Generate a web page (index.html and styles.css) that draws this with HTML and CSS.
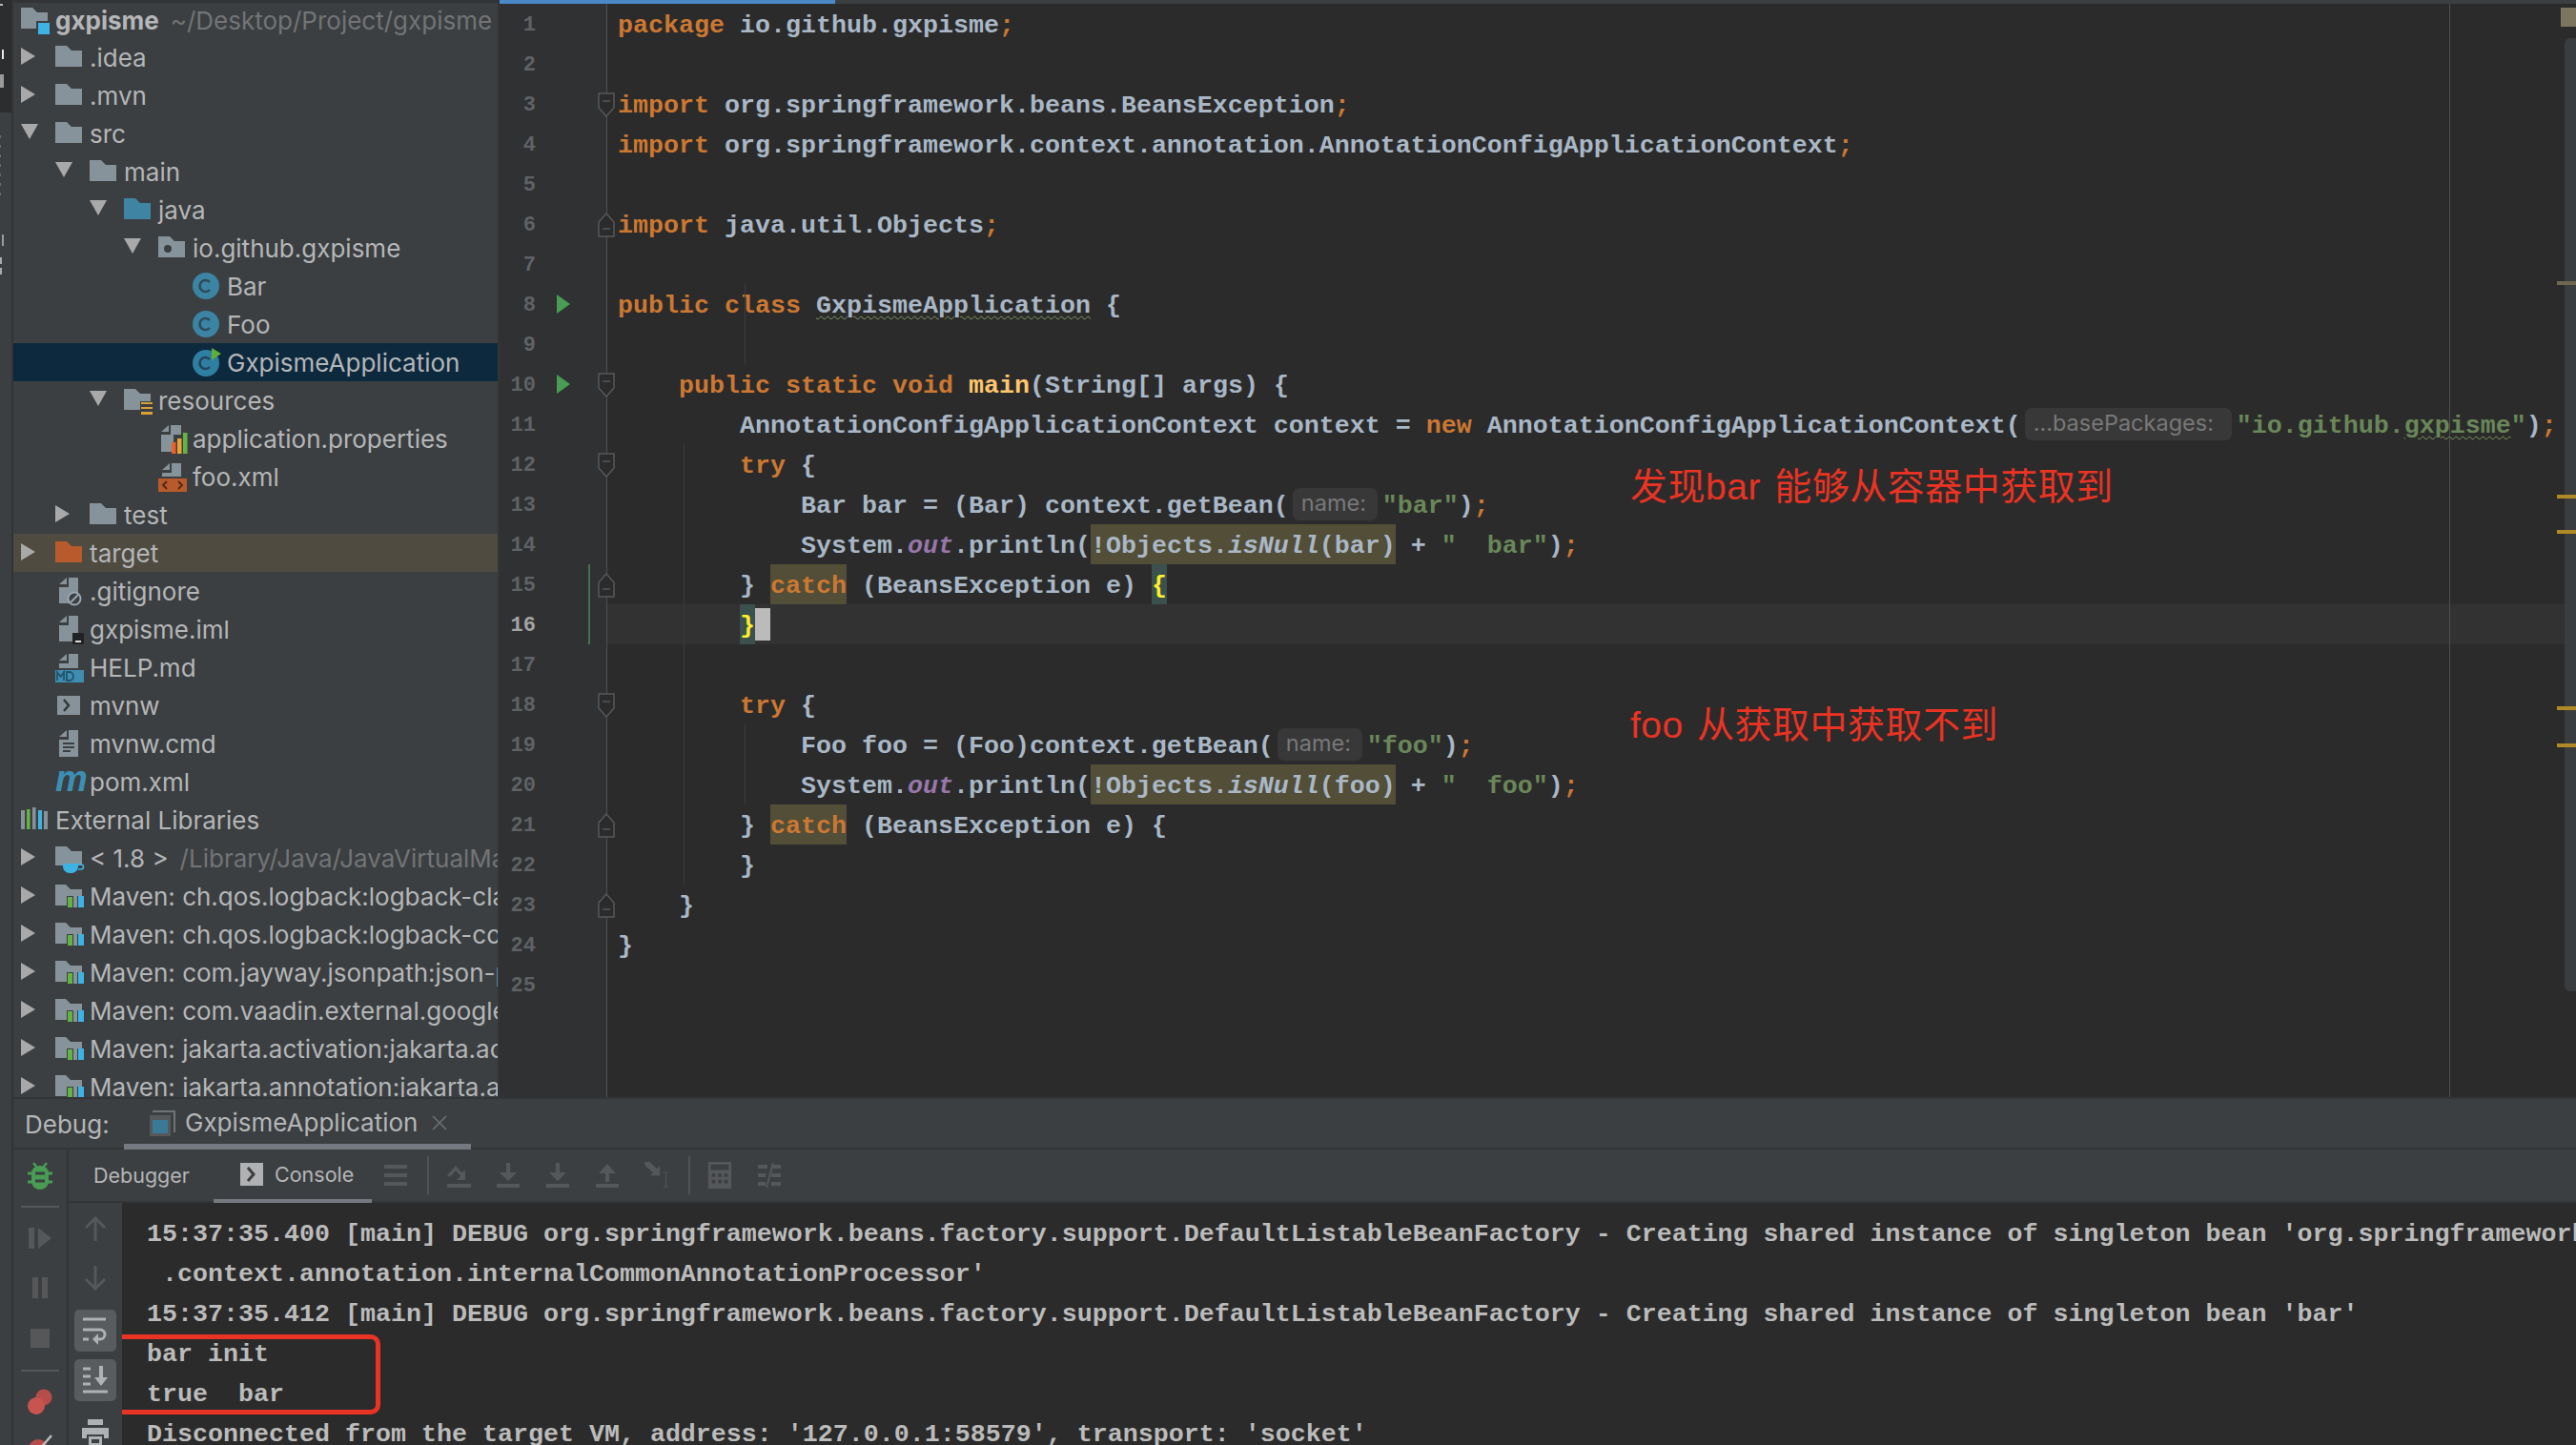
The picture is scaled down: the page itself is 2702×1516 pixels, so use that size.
FILE: index.html
```html
<!DOCTYPE html>
<html lang="en">
<head>
<meta charset="utf-8">
<title>GxpismeApplication</title>
<link rel="stylesheet" href="styles.css">
</head>
<body>
<svg class="defs" width="0" height="0">
  <symbol id="folder" viewBox="0 0 36 40"><path d="M0 8h12l5 5h11v17H0z" fill="currentColor"/></symbol>
  <symbol id="project" viewBox="0 0 36 40"><path d="M0 8h12l5 5h11v17H0z" fill="#87939a"/><rect x="16" y="22" width="16" height="16" fill="#3c3f41"/><rect x="18" y="24" width="12" height="12" fill="#3db3e4"/></symbol>
  <symbol id="pkg" viewBox="0 0 36 40"><path d="M0 8h12l5 5h11v17H0z" fill="#87939a"/><circle cx="10" cy="21" r="4" fill="#3c3f41"/></symbol>
  <symbol id="res" viewBox="0 0 36 40"><path d="M0 8h12l5 5h11v8H17v9H0z" fill="#87939a"/><path d="M18 22h12v2H18zM18 27h12v2H18zM18 32h12v3H18z" fill="#d9a036"/></symbol>
  <symbol id="cls" viewBox="0 0 36 40"><circle cx="14" cy="20" r="14" fill="#3b84a3"/><path d="M18 16a6 6 0 1 0 0 8" fill="none" stroke="#2f4a58" stroke-width="2.6"/></symbol>
  <symbol id="clsrun" viewBox="0 0 36 40"><circle cx="14" cy="21" r="14" fill="#2f7fa3"/><path d="M18 17a6 6 0 1 0 0 8" fill="none" stroke="#22455a" stroke-width="2.6"/><path d="M20 5l10 6-10 7z" fill="#5fae3a"/></symbol>
  <symbol id="ign" viewBox="0 0 36 40"><path d="M4 13l8-7v7zM14 6h10v27H4V16h10z" fill="#87939a"/><circle cx="20" cy="28" r="6.5" fill="#3c3f41" stroke="#9aa7b0" stroke-width="2"/><path d="M16 32l8-8" stroke="#9aa7b0" stroke-width="2"/></symbol>
  <symbol id="iml" viewBox="0 0 36 40"><path d="M4 13l8-7v7zM14 6h10v27H4V16h10z" fill="#87939a"/><rect x="18" y="24" width="12" height="12" fill="#222224"/><rect x="21" y="32" width="6" height="2" fill="#ddd"/></symbol>
  <symbol id="md" viewBox="0 0 36 40"><path d="M4 13l8-7v7zM14 6h10v15H4v-5h10z" fill="#87939a"/><rect x="0" y="23" width="30" height="13" fill="#3f8db0"/><path d="M2 34v-9l3.500 5 3.500-5v9M12 25v9h3a4 4.500 0 0 0 0-9z" fill="none" stroke="#23536b" stroke-width="1.800"/></symbol>
  <symbol id="term" viewBox="0 0 36 40"><rect x="2" y="10" width="24" height="20" fill="#87939a"/><path d="M9 14l5 6-5 6" fill="none" stroke="#33373a" stroke-width="2.400"/></symbol>
  <symbol id="cmd" viewBox="0 0 36 40"><path d="M4 13l8-7v7zM14 6h10v28H4V16h10z" fill="#87939a"/><path d="M8 20h12M8 24h12M8 28h8" stroke="#3c3f41" stroke-width="2"/></symbol>
  <symbol id="props" viewBox="0 0 36 40"><path d="M3 13l8-7v7zM13 6h11v10h-8v18H3V16h10z" fill="#87939a"/><rect x="14" y="24" width="4.500" height="12" fill="#e8622a"/><rect x="20" y="20" width="4.500" height="16" fill="#e8a23a"/><rect x="26" y="14" width="4.500" height="22" fill="#62b543"/></symbol>
  <symbol id="xml" viewBox="0 0 36 40"><path d="M4 13l8-7v7zM14 6h10v14H4v-4h10z" fill="#87939a"/><rect x="0" y="22" width="30" height="14" fill="#b85a2b"/><path d="M9 25l-4 4 4 4M21 25l4 4-4 4" fill="none" stroke="#4a2a18" stroke-width="1.800"/></symbol>
  <symbol id="libs" viewBox="0 0 36 40"><path d="M0 10h4v20H0z" fill="#87939a"/><rect x="6" y="9" width="3.500" height="21" fill="#62b543"/><rect x="12" y="7" width="3.500" height="23" fill="#87939a"/><rect x="24" y="11" width="4" height="19" fill="#87939a"/><rect x="18" y="10" width="4" height="20" fill="#3db3e4"/></symbol>
  <symbol id="mvnlib" viewBox="0 0 36 40"><path d="M0 8h11l5 5h12v7H12v10H0z" fill="#87939a"/><rect x="13" y="21" width="5" height="11" fill="#62b543"/><rect x="19" y="17" width="4" height="15" fill="#87939a"/><rect x="24" y="20" width="6" height="12" fill="#3db3e4"/></symbol>
  <symbol id="jdk" viewBox="0 0 36 40"><path d="M0 8h12l5 5h11v15H0z" fill="#87939a"/><path d="M8 26h16v3a7 7 0 0 1-7 7h-2a7 7 0 0 1-7-7z" fill="#3db3e4"/><path d="M24 27h3a2.500 2.500 0 0 1 0 5h-3" fill="none" stroke="#3db3e4" stroke-width="1.500"/></symbol>
  <symbol id="fold-down" viewBox="0 0 18 26"><path d="M1 1h16v15l-8 9-8-9z" fill="#2b2b2b" stroke="#55585a" stroke-width="1.500"/><path d="M5 9h8" stroke="#55585a" stroke-width="1.500"/></symbol>
  <symbol id="fold-up" viewBox="0 0 18 26"><path d="M1 25h16V10L9 1 1 10z" fill="#2b2b2b" stroke="#55585a" stroke-width="1.500"/><path d="M5 17h8" stroke="#55585a" stroke-width="1.500"/></symbol>
</svg>

<div class="app">
  <aside class="strip">
    <svg class="strip-art" width="12" height="1516">
      <rect width="12" height="118" fill="#2b2d2f"/>
      <rect x="2" y="52" width="2" height="10" fill="#e6e6e6"/>
      <rect x="0" y="78" width="4" height="14" fill="#9a9a9a"/>
      <rect x="0" y="4" width="3" height="2" fill="#bbb"/>
      <path d="M0 142v68" stroke="#77797b" stroke-width="1.500" stroke-dasharray="3 7"/>
      <rect x="2" y="246" width="2" height="12" fill="#9a9a9a"/>
      <rect x="0" y="270" width="2" height="7" fill="#aaa"/>
      <rect x="0" y="281" width="2" height="7" fill="#aaa"/>
    </svg>
  </aside>

  <div class="workspace">
    <div class="upper">
      <nav class="tree">
        <div class="row root first"><svg class="ic"><use href="#project"/></svg><b class="name">gxpisme</b><span class="dim">~/Desktop/Project/gxpisme</span></div>
        <div class="row l0"><i class="tw r"></i><svg class="ic grey"><use href="#folder"/></svg><span>.idea</span></div>
        <div class="row l0"><i class="tw r"></i><svg class="ic grey"><use href="#folder"/></svg><span>.mvn</span></div>
        <div class="row l0"><i class="tw d"></i><svg class="ic grey"><use href="#folder"/></svg><span>src</span></div>
        <div class="row l1"><i class="tw d"></i><svg class="ic grey"><use href="#folder"/></svg><span>main</span></div>
        <div class="row l2"><i class="tw d"></i><svg class="ic blue"><use href="#folder"/></svg><span>java</span></div>
        <div class="row l3"><i class="tw d"></i><svg class="ic"><use href="#pkg"/></svg><span>io.github.gxpisme</span></div>
        <div class="row l4"><i class="tw"></i><svg class="ic"><use href="#cls"/></svg><span>Bar</span></div>
        <div class="row l4"><i class="tw"></i><svg class="ic"><use href="#cls"/></svg><span>Foo</span></div>
        <div class="row l4 selected"><i class="tw"></i><svg class="ic"><use href="#clsrun"/></svg><span>GxpismeApplication</span></div>
        <div class="row l2"><i class="tw d"></i><svg class="ic"><use href="#res"/></svg><span>resources</span></div>
        <div class="row l3"><i class="tw"></i><svg class="ic"><use href="#props"/></svg><span>application.properties</span></div>
        <div class="row l3"><i class="tw"></i><svg class="ic"><use href="#xml"/></svg><span>foo.xml</span></div>
        <div class="row l1"><i class="tw r"></i><svg class="ic grey"><use href="#folder"/></svg><span>test</span></div>
        <div class="row l0 excluded"><i class="tw r"></i><svg class="ic orange"><use href="#folder"/></svg><span>target</span></div>
        <div class="row l0"><i class="tw"></i><svg class="ic"><use href="#ign"/></svg><span>.gitignore</span></div>
        <div class="row l0"><i class="tw"></i><svg class="ic"><use href="#iml"/></svg><span>gxpisme.iml</span></div>
        <div class="row l0"><i class="tw"></i><svg class="ic"><use href="#md"/></svg><span>HELP.md</span></div>
        <div class="row l0"><i class="tw"></i><svg class="ic"><use href="#term"/></svg><span>mvnw</span></div>
        <div class="row l0"><i class="tw"></i><svg class="ic"><use href="#cmd"/></svg><span>mvnw.cmd</span></div>
        <div class="row l0"><i class="tw"></i><span class="ic pom">m</span><span>pom.xml</span></div>
        <div class="row root"><svg class="ic"><use href="#libs"/></svg><span>External Libraries</span></div>
        <div class="row l0"><i class="tw r"></i><svg class="ic"><use href="#jdk"/></svg><span>&lt; 1.8 &gt;</span><span class="dim">/Library/Java/JavaVirtualMachines</span></div>
        <div class="row l0"><i class="tw r"></i><svg class="ic"><use href="#mvnlib"/></svg><span>Maven: ch.qos.logback:logback-classic</span></div>
        <div class="row l0"><i class="tw r"></i><svg class="ic"><use href="#mvnlib"/></svg><span>Maven: ch.qos.logback:logback-core</span></div>
        <div class="row l0"><i class="tw r"></i><svg class="ic"><use href="#mvnlib"/></svg><span>Maven: com.jayway.jsonpath:json-path</span></div>
        <div class="row l0"><i class="tw r"></i><svg class="ic"><use href="#mvnlib"/></svg><span>Maven: com.vaadin.external.google</span></div>
        <div class="row l0"><i class="tw r"></i><svg class="ic"><use href="#mvnlib"/></svg><span>Maven: jakarta.activation:jakarta.activation</span></div>
        <div class="row l0"><i class="tw r"></i><svg class="ic"><use href="#mvnlib"/></svg><span>Maven: jakarta.annotation:jakarta.annotation</span></div>
      </nav>

      <main class="editor">
        <div class="tabline"><div class="tabline-active"></div></div>
        <div class="editor-body">
          <div class="gutter">
            <div class="gl"><span class="num">1</span></div>
            <div class="gl"><span class="num">2</span></div>
            <div class="gl"><span class="num">3</span><svg class="fold"><use href="#fold-down"/></svg></div>
            <div class="gl"><span class="num">4</span></div>
            <div class="gl"><span class="num">5</span></div>
            <div class="gl"><span class="num">6</span><svg class="fold"><use href="#fold-up"/></svg></div>
            <div class="gl"><span class="num">7</span></div>
            <div class="gl"><span class="num">8</span><i class="run"></i></div>
            <div class="gl"><span class="num">9</span></div>
            <div class="gl"><span class="num">10</span><i class="run"></i><svg class="fold"><use href="#fold-down"/></svg></div>
            <div class="gl"><span class="num">11</span></div>
            <div class="gl"><span class="num">12</span><svg class="fold"><use href="#fold-down"/></svg></div>
            <div class="gl"><span class="num">13</span></div>
            <div class="gl"><span class="num">14</span></div>
            <div class="gl changed"><span class="num">15</span><svg class="fold"><use href="#fold-up"/></svg></div>
            <div class="gl changed"><span class="num cur">16</span></div>
            <div class="gl"><span class="num">17</span></div>
            <div class="gl"><span class="num">18</span><svg class="fold"><use href="#fold-down"/></svg></div>
            <div class="gl"><span class="num">19</span></div>
            <div class="gl"><span class="num">20</span></div>
            <div class="gl"><span class="num">21</span><svg class="fold"><use href="#fold-up"/></svg></div>
            <div class="gl"><span class="num">22</span></div>
            <div class="gl"><span class="num">23</span><svg class="fold"><use href="#fold-up"/></svg></div>
            <div class="gl"><span class="num">24</span></div>
            <div class="gl"><span class="num">25</span></div>
          </div>
          <div class="code">
            <div class="guide g1"></div><div class="guide g2"></div><div class="guide g3"></div>
            <div class="ln"><span class="k">package</span> io.github.gxpisme<span class="k">;</span></div>
            <div class="ln"></div>
            <div class="ln"><span class="k">import</span> org.springframework.beans.BeansException<span class="k">;</span></div>
            <div class="ln"><span class="k">import</span> org.springframework.context.annotation.AnnotationConfigApplicationContext<span class="k">;</span></div>
            <div class="ln"></div>
            <div class="ln"><span class="k">import</span> java.util.Objects<span class="k">;</span></div>
            <div class="ln"></div>
            <div class="ln"><span class="k">public class</span> <span class="warn">GxpismeApplication</span> {</div>
            <div class="ln"></div>
            <div class="ln">    <span class="k">public static void</span> <span class="m">main</span>(String[] args) {</div>
            <div class="ln">        AnnotationConfigApplicationContext context = <span class="k">new</span> AnnotationConfigApplicationContext(<span class="hint hint-long">...basePackages:</span><span class="s">"io.github.<span class="warn">gxpisme</span>"</span>)<span class="k">;</span></div>
            <div class="ln">        <span class="k">try</span> {</div>
            <div class="ln">            Bar bar = (Bar) context.getBean(<span class="hint">name:</span><span class="s">"bar"</span>)<span class="k">;</span></div>
            <div class="ln">            System.<span class="o">out</span>.println(<span class="hl">!Objects.<i>isNull</i>(bar)</span> + <span class="s">"  bar"</span>)<span class="k">;</span></div>
            <div class="ln">        } <span class="hl k">catch</span> (BeansException e) <span class="brace">{</span></div>
            <div class="ln current">        <span class="brace">}</span><span class="caret"></span></div>
            <div class="ln"></div>
            <div class="ln">        <span class="k">try</span> {</div>
            <div class="ln">            Foo foo = (Foo)context.getBean(<span class="hint">name:</span><span class="s">"foo"</span>)<span class="k">;</span></div>
            <div class="ln">            System.<span class="o">out</span>.println(<span class="hl">!Objects.<i>isNull</i>(foo)</span> + <span class="s">"  foo"</span>)<span class="k">;</span></div>
            <div class="ln">        } <span class="hl k">catch</span> (BeansException e) {</div>
            <div class="ln">        }</div>
            <div class="ln">    }</div>
            <div class="ln">}</div>
            <div class="ln"></div>
            <div class="note note-a">发现bar 能够从容器中获取到</div>
            <div class="note note-b">foo 从获取中获取不到</div>
            <div class="margin-line"></div>
          </div>
          <div class="scroll">
            <div class="scroll-thumb"></div>
            <div class="mark top"></div>
            <div class="mark m1"></div><div class="mark m2"></div><div class="mark m3"></div><div class="mark m4"></div><div class="mark m5"></div>
          </div>
        </div>
      </main>
    </div>

    <section class="debug">
      <header class="debug-tabs">
        <span class="debug-title">Debug:</span>
        <div class="debug-tab">
          <svg class="tab-ic" width="28" height="30" viewBox="0 0 28 30"><path d="M4 3h23v22" fill="none" stroke="#6e7477" stroke-width="2"/><rect x="1" y="7" width="22" height="22" fill="#55595c"/><rect x="4" y="12" width="16" height="14" fill="#3b7a96"/></svg>
          <span>GxpismeApplication</span>
          <svg class="tab-x" width="16" height="16" viewBox="0 0 16 16"><path d="M1 1l14 14M15 1L1 15" stroke="#6e7072" stroke-width="1.600"/></svg>
        </div>
      </header>
      <div class="debug-body">
        <div class="rail">
          <div class="slot s-bug"><svg width="26" height="30" viewBox="0 0 26 30"><path d="M6 1l4 5M20 1l-4 5" stroke="#499c54" stroke-width="2.400"/><path d="M13 4c6 0 9 4 9 8v8c0 5-4 9-9 9s-9-4-9-9v-8c0-4 3-8 9-8z" fill="#499c54"/><path d="M0 12h26M0 21h26" stroke="#499c54" stroke-width="3"/><path d="M8 12h10M8 20h10" stroke="#3c3f41" stroke-width="3"/></svg></div>
          <div class="sep"></div>
          <div class="slot s-a"><svg width="24" height="22" viewBox="0 0 24 22"><path d="M0 0h6v22H0zM10 0l14 11-14 11z" fill="#555759"/></svg></div>
          <div class="slot s-b"><svg width="16" height="22" viewBox="0 0 16 22"><path d="M0 0h6v22H0zM10 0h6v22h-6z" fill="#555759"/></svg></div>
          <div class="slot s-c"><svg width="20" height="20" viewBox="0 0 20 20"><rect width="20" height="20" fill="#555759"/></svg></div>
          <div class="sep"></div>
          <div class="slot s-d"><svg width="28" height="28" viewBox="0 0 28 28"><circle cx="18" cy="9" r="8.500" fill="#b84c4a"/><circle cx="10" cy="18" r="9" fill="#c75450"/></svg></div>
          <div class="slot s-e"><svg width="28" height="28" viewBox="0 0 28 28"><circle cx="12" cy="18" r="10" fill="#b84c4a"/><path d="M12 20L26 4" stroke="#bbb" stroke-width="2.500"/></svg></div>
        </div>
        <div class="debug-main">
          <div class="toolbar">
            <span class="tb-tab">Debugger</span>
            <span class="tb-tab active"><svg width="24" height="24" viewBox="0 0 24 24"><rect width="24" height="24" fill="#afb1b3"/><path d="M8 5l6 7-6 7" fill="none" stroke="#3c3f41" stroke-width="3"/></svg>Console</span>
            <svg class="tb tb-list" viewBox="0 0 26 26"><path d="M1 2h24v4H1zM1 11h24v4H1zM1 20h24v4H1z" fill="#555759"/></svg>
            <i class="tb-sep"></i>
            <svg class="tb" viewBox="0 0 26 26"><path d="M1 13L10 3l6 7 4-2v10h-9l4-4-5-6-6 7zM1 22h25v4H1z" fill="#555759"/></svg>
            <svg class="tb" viewBox="0 0 26 26"><path d="M11 0h4v10h7L13 19 4 10h7zM1 22h24v4H1z" fill="#555759"/></svg>
            <svg class="tb" viewBox="0 0 26 26"><path d="M11 0h4v10h7L13 19 4 10h7zM1 22h24v4H1z" fill="#555759"/></svg>
            <svg class="tb" viewBox="0 0 26 26"><path d="M13 1l9 10h-7v9h-4v-9H4zM1 22h24v4H1z" fill="#555759"/></svg>
            <svg class="tb" viewBox="0 0 26 30"><path d="M0 0h4l9 8 3-3v10H6l3-3-9-8zM20 12h6M20 28h6M23 12v16" fill="#555759" stroke="#555759" stroke-width="1"/></svg>
            <i class="tb-sep"></i>
            <svg class="tb tb-calc" viewBox="0 0 26 30"><path fill-rule="evenodd" d="M0 0h26v30H0zM3 3v6h20V3zM4 13v4h4v-4zM11 13v4h4v-4zM18 13v4h4v-4zM4 20v4h4v-4zM11 20v4h4v-4zM18 20v4h4v-4z" fill="#555759"/></svg>
            <svg class="tb" viewBox="0 0 26 26"><path d="M1 2h10v4H1zM1 11h8v4H1zM1 20h8v4H1zM15 2h10v4H15zM15 11h10v4H15zM15 20h10v4H15z" fill="#555759"/><path d="M17 0l-7 26" stroke="#555759" stroke-width="2"/></svg>
          </div>
          <div class="console-wrap">
            <div class="rail2">
              <div class="slot2 up"><svg width="22" height="26" viewBox="0 0 22 26"><path d="M11 26V2M1 12L11 2l10 10" fill="none" stroke="#555759" stroke-width="3"/></svg></div>
              <div class="slot2 down"><svg width="22" height="26" viewBox="0 0 22 26"><path d="M11 0v24M1 14l10 10 10-10" fill="none" stroke="#555759" stroke-width="3"/></svg></div>
              <div class="toggle"><svg width="26" height="30" viewBox="0 0 26 30"><path d="M0 3h24M0 14h18a5 5 0 0 1 0 10h-4M0 24h6" fill="none" stroke="#afb1b3" stroke-width="3"/><path d="M16 18l-6 6 6 6z" fill="#afb1b3"/></svg></div>
              <div class="toggle"><svg width="26" height="30" viewBox="0 0 26 30"><path d="M0 3h8M0 11h8M0 19h8M0 27h26" fill="none" stroke="#afb1b3" stroke-width="3"/><path d="M17 0h4v12h5l-7 9-7-9h5z" fill="#afb1b3"/></svg></div>
              <div class="slot2 print"><svg width="28" height="28" viewBox="0 0 28 28"><path d="M6 0h16v6H6zM0 9h28v11h-5v-4H5v4H0zM7 18h14v10H7z M10 21v4h8v-4z" fill="#afb1b3" fill-rule="evenodd"/></svg></div>
            </div>
            <div class="console">
              <div class="cl">15:37:35.400 [main] DEBUG org.springframework.beans.factory.support.DefaultListableBeanFactory - Creating shared instance of singleton bean 'org.springframework</div>
              <div class="cl"> .context.annotation.internalCommonAnnotationProcessor'</div>
              <div class="cl">15:37:35.412 [main] DEBUG org.springframework.beans.factory.support.DefaultListableBeanFactory - Creating shared instance of singleton bean 'bar'</div>
              <div class="cl">bar init</div>
              <div class="cl">true  bar</div>
              <div class="cl">Disconnected from the target VM, address: '127.0.0.1:58579', transport: 'socket'</div>
              <div class="redbox"></div>
            </div>
          </div>
        </div>
      </div>
    </section>
  </div>
</div>
</body>
</html>
```
FILE: styles.css
```css
* { box-sizing: border-box; }
html, body { margin: 0; padding: 0; }
body {
  width: 2702px; height: 1516px; overflow: hidden;
  background: #3c3f41; color: #bbbbbb;
  font-family: "Inter", "Roboto", "Liberation Sans", sans-serif;
}
.defs { position: absolute; }
.app { display: flex; height: 1516px; }
.strip { width: 14px; flex: none; background: #3c3f41; border-right: 2px solid #313335; }
.strip-art { display: block; }
.workspace { flex: 1; min-width: 0; display: flex; flex-direction: column; }
.upper { height: 1151px; display: flex; flex: none; }

/* project tree */
.tree {
  width: 510px; flex: none; overflow: hidden;
  border-right: 2px solid #323436; border-top: 3px solid #323436;
  font-size: 26px; color: #b4b6b8;
}
.row { height: 40px; display: flex; align-items: center; white-space: nowrap; overflow: hidden; padding-left: 22px; }
.row.first { height: 37px; }
.row.first .ic { margin-top: -3px; }
.row.l0 { padding-left: 8px; }
.row.root { padding-left: 8px; }
.row.l1 { padding-left: 44px; }
.row.l2 { padding-left: 80px; }
.row.l3 { padding-left: 116px; }
.row.l4 { padding-left: 152px; }
.tw { width: 36px; height: 40px; flex: none; position: relative; }
.tw.r::before { content: ""; position: absolute; left: 0; top: 10px; border-left: 15px solid #a9a9a9; border-top: 9px solid transparent; border-bottom: 9px solid transparent; }
.tw.d::before { content: ""; position: absolute; left: 0; top: 10px; border-top: 16px solid #a9a9a9; border-left: 9px solid transparent; border-right: 9px solid transparent; }
.ic { width: 36px; height: 40px; flex: none; display: block; }
.grey { color: #87939a; }
.blue { color: #3f85a3; }
.orange { color: #b85a2b; }
.pom { font: italic bold 38px/34px "Liberation Sans", sans-serif; color: #3b8fb5; letter-spacing: -1px; }
.name { font-weight: 700; color: #b4b6b8; }
.dim { color: #727476; margin-left: 12px; }
.selected { background: #0d293e; }
.excluded { background: #4f4b41; }

/* editor */
.editor { flex: 1; min-width: 0; background: #2b2b2b; display: flex; flex-direction: column; }
.tabline { height: 4px; flex: none; background: #3c3f41; }
.tabline-active { width: 352px; height: 4px; background: #4a88c7; }
.editor-body { flex: 1; min-height: 0; display: flex; overflow: hidden; }
.gutter { width: 113px; flex: none; background: #2f3133; border-right: 1px solid #4f5153; position: relative; z-index: 1; }
.gl { height: 42px; display: flex; align-items: center; position: relative; }
.num { width: 38px; flex: none; text-align: right; padding-top: 3px; font: bold 22px/42px "Liberation Mono", monospace; color: #5f6265; }
.num.cur { color: #a4a3a3; }
.run { flex: none; margin-left: 22px; border-left: 14px solid #499c54; border-top: 10px solid transparent; border-bottom: 10px solid transparent; }
.fold { width: 18px; height: 26px; position: absolute; left: 103px; top: 9px; }
.changed::after { content: ""; position: absolute; left: 93px; top: 0; bottom: 0; width: 2px; background: #447152; }
.code {
  flex: 1; min-width: 0; position: relative; padding-left: 11px;
  font: bold 26.67px/46px "Liberation Mono", monospace; color: #a9b7c6;
}
.ln { height: 42px; white-space: pre; margin-left: -11px; padding-left: 11px; margin-right: -200px; }
.ln.current { background: #323232; }
.k { color: #cc7832; }
.m { color: #ffc66d; }
.s { color: #6a8759; }
.o { color: #9876aa; font-style: italic; }
.hl { display: inline-block; height: 42px; background: #524e38; vertical-align: top; }
.hl i { font-style: italic; }
.brace { display: inline-block; height: 42px; background: #3a514d; color: #ffef28; vertical-align: top; }
.caret { display: inline-block; width: 16px; height: 34px; margin-top: 4px; background: #bbbbbb; vertical-align: top; }
.warn { text-decoration: underline wavy #7f9a5f 1px; text-underline-offset: 3px; }
.hint {
  display: inline-block; vertical-align: top; height: 34px; margin: 4px 5px 0 4px; width: 89px;
  padding-left: 9px; border-radius: 7px; background: #383838; color: #787878;
  font: 23.5px/32px "Inter", sans-serif;
}
.hint-long { width: 217px; margin-right: 5px; }
.guide { position: absolute; width: 1px; background: #3b3b3b; }
.g1 { left: 80px; top: 462px; height: 462px; }
.g2 { left: 144px; top: 294px; height: 84px; }
.g3 { left: 144px; top: 756px; height: 84px; }
.margin-line { position: absolute; left: 1932px; top: 0; bottom: 0; width: 1px; background: #4e5052; }
.note { position: absolute; left: 1073px; font: 39px/50px "Liberation Sans", "Noto Sans CJK SC", sans-serif; letter-spacing: 0.5px; word-spacing: 3px; color: #ea3323; white-space: nowrap; }
.note-a { top: 482px; }
.note-b { top: 732px; }
.scroll { width: 20px; flex: none; position: relative; margin-left: -20px; }
.scroll-thumb { position: absolute; right: 0; top: 36px; width: 12px; height: 1000px; background: #3a3d3f; border-radius: 6px 0 0 6px; }
.mark { position: absolute; right: 0; width: 20px; height: 4px; background: #b08a26; }
.mark.top { top: 4px; width: 16px; height: 20px; background: #7d7560; }
.m1 { top: 291px; background: #6f6850; }
.m2 { top: 515px; }
.m3 { top: 552px; }
.m4 { top: 737px; }
.m5 { top: 776px; }

/* debug */
.debug { flex: 1; min-height: 0; display: flex; flex-direction: column; overflow: hidden; }
.debug-tabs { height: 55px; flex: none; display: flex; align-items: center; border-top: 2px solid #323436; border-bottom: 2px solid #323436; font-size: 26px; }
.debug-title { margin-left: 12px; width: 104px; flex: none; color: #b4b6b8; padding-top: 2px; }
.debug-tab { height: 53px; margin-bottom: -2px; width: 364px; display: flex; align-items: center; padding-left: 26px; border-bottom: 6px solid #747a80; color: #b4b6b8; flex: none; padding-top: 2px; }
.tab-ic { margin-right: 10px; flex: none; }
.tab-x { margin-left: 15px; flex: none; }
.debug-body { flex: 1; min-height: 0; display: flex; }
.rail { width: 58px; flex: none; border-right: 2px solid #323436; display: flex; flex-direction: column; align-items: center; overflow: hidden; }
.slot { display: flex; align-items: center; justify-content: center; flex: none; }
.sep { width: 40px; height: 2px; margin: 3px 0; background: #55585a; flex: none; }
.s-bug { height: 56px; }
.s-a { height: 58px; }
.s-b { height: 46px; }
.s-c { height: 60px; }
.s-d { height: 58px; }
.s-e { height: 32px; }
.debug-main { flex: 1; min-width: 0; display: flex; flex-direction: column; }
.toolbar { height: 56px; flex: none; display: flex; align-items: center; padding-left: 26px; border-bottom: 2px solid #323436; }
.tb-tab { font-size: 21.5px; color: #b4b6b8; width: 126px; flex: none; }
.tb-tab.active { width: 166px; height: 56px; margin-bottom: -2px; padding-left: 28px; display: flex; align-items: center; gap: 12px; border-bottom: 4px solid #747a80; }
.tb { width: 26px; height: 28px; flex: none; margin-left: 26px; display: block; }
.tb-list { margin-left: 12px; }
.tb-sep { width: 2px; height: 40px; background: #505355; flex: none; margin-left: 20px; margin-right: -8px; }
.tb-calc { margin-left: 26px; }
.console-wrap { flex: 1; min-height: 0; display: flex; }
.rail2 { width: 56px; flex: none; display: flex; flex-direction: column; align-items: center; overflow: hidden; }
.slot2 { flex: none; display: flex; justify-content: center; align-items: center; width: 100%; }
.up { height: 54px; }
.down { height: 50px; }
.toggle { width: 44px; height: 44px; flex: none; margin-top: 8px; border-radius: 5px; background: #585c5e; display: flex; align-items: center; justify-content: center; }
.print { height: 30px; margin-top: 18px; flex: none; }
.console { flex: 1; min-width: 0; background: #2b2b2b; position: relative; padding-left: 26px; padding-top: 10px; overflow: hidden; font: bold 26.67px/46px "Liberation Mono", monospace; color: #bbbbbb; }
.cl { height: 42px; white-space: pre; }
.redbox { position: absolute; left: -19px; top: 138px; width: 290px; height: 84px; border: 5px solid #e93323; border-radius: 10px; }
```
